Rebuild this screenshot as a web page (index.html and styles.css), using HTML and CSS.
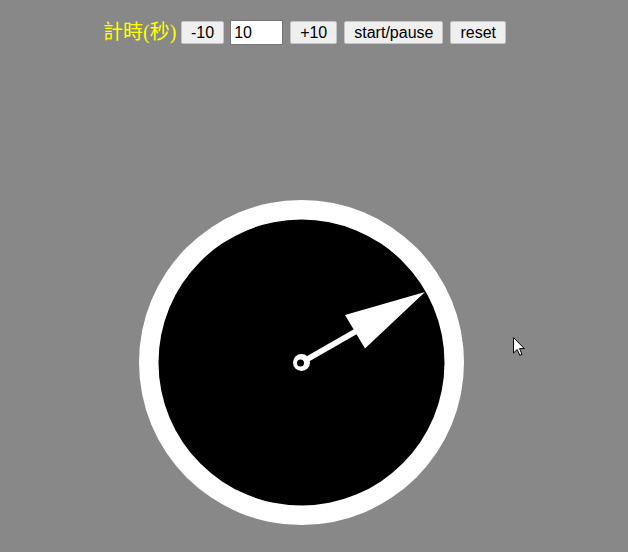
FILE: index.html
```html
<!DOCTYPE html>
<html>
<head>
<meta charset="utf-8">
<link rel="stylesheet" href="styles.css">
</head>
<body>
<div class="controls">
  <span class="label">計時(秒)</span>
  <button class="btn">-10</button>
  <input class="seconds" type="text" value="10">
  <button class="btn">+10</button>
  <button class="btn">start/pause</button>
  <button class="btn">reset</button>
</div>
<svg class="dial" width="628" height="500" viewBox="0 0 628 500">
  <circle cx="301.5" cy="310.5" r="162.5" fill="#fff"/>
  <circle cx="301.5" cy="310.5" r="143" fill="#000"/>
  <line x1="301.5" y1="310.5" x2="360" y2="277" stroke="#fff" stroke-width="5.5"/>
  <polygon points="345,263 425,240 365,296.5" fill="#fff"/>
  <circle cx="301.5" cy="310.5" r="8.5" fill="#fff"/>
  <circle cx="300.5" cy="311" r="3.5" fill="#000"/>
</svg>
<svg class="cursor" width="13" height="20" viewBox="0 0 13 20">
  <path d="M0.5,0.5 L0.5,16 L4.2,12.5 L6.8,18.3 L9,17.3 L6.5,11.6 L11.3,11.6 Z" fill="#fff" stroke="#000" stroke-width="1"/>
</svg>
</body>
</html>
```
FILE: styles.css
```css
html, body {
  margin: 0;
  padding: 0;
  background: #888888;
  width: 628px;
  height: 552px;
  overflow: hidden;
}
body {
  position: relative;
  font-family: "Liberation Sans", Arial, sans-serif;
}
.controls {
  height: 52px;
  box-sizing: border-box;
  padding-top: 20px;
  padding-left: 103px;
  display: flex;
  align-items: flex-start;
}
.label {
  color: #ffff00;
  font-family: "Liberation Serif", "Noto Sans CJK TC", serif;
  font-size: 20px;
  line-height: 25px;
  width: 72px;
  margin-right: 6px;
  font-weight: normal;
  white-space: nowrap;
}
.btn {
  font-family: "Liberation Sans", Arial, sans-serif;
  font-size: 16px;
  line-height: 19px;
  height: 23px;
  margin-top: 1px;
  padding: 1px 9px;
  border: 1px solid #c4c4c4;
  border-radius: 2px;
  background: #efefef;
  color: #000;
  margin-right: 7px;
}
.btn:first-of-type {
  margin-right: 6px;
}
.seconds {
  font-family: "Liberation Sans", Arial, sans-serif;
  font-size: 16px;
  width: 53px;
  height: 25px;
  box-sizing: border-box;
  padding: 1px 3px;
  border: 1px solid #767676;
  background: #fff;
  color: #000;
  margin-right: 7px;
}
.dial {
  display: block;
}
.cursor {
  position: absolute;
  left: 513px;
  top: 337px;
}
```
